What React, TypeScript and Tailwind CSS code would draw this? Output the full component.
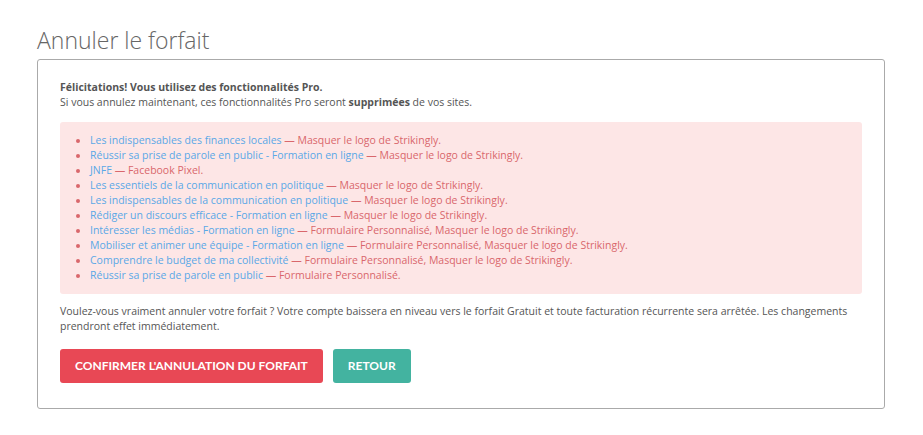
import React from "react";

const items: { a: string; b: string }[] = [
  { a: "Les indispensables des finances locales", b: "Masquer le logo de Strikingly." },
  { a: "Réussir sa prise de parole en public - Formation en ligne", b: "Masquer le logo de Strikingly." },
  { a: "JNFE", b: "Facebook Pixel." },
  { a: "Les essentiels de la communication en politique", b: "Masquer le logo de Strikingly." },
  { a: "Les indispensables de la communication en politique", b: "Masquer le logo de Strikingly." },
  { a: "Rédiger un discours efficace - Formation en ligne", b: "Masquer le logo de Strikingly." },
  { a: "Intéresser les médias - Formation en ligne", b: "Formulaire Personnalisé, Masquer le logo de Strikingly." },
  { a: "Mobiliser et animer une équipe - Formation en ligne", b: "Formulaire Personnalisé, Masquer le logo de Strikingly." },
  { a: "Comprendre le budget de ma collectivité", b: "Formulaire Personnalisé, Masquer le logo de Strikingly." },
  { a: "Réussir sa prise de parole en public", b: "Formulaire Personnalisé." },
];

export default function App() {
  return (
    <div className="w-[923px] h-[435px] bg-white font-['Open_Sans',sans-serif] text-[#555]">
      <div className="pl-[37px] pr-[38px] pt-[22px]">
        <h1 className="text-[23px] leading-[36px] font-light text-[#666]">Annuler le forfait</h1>
        <div className="mt-[1px] border border-[#aaa] rounded-[3px] px-[22px] pt-[20px] pb-[25px]">
          <p className="text-[10.5px] leading-[15px] text-[#555]">
            <span className="font-bold">Félicitations! Vous utilisez des fonctionnalités Pro.</span>
            <br />
            Si vous annulez maintenant, ces fonctionnalités Pro seront <span className="font-bold">supprimées</span> de vos sites.
          </p>
          <div className="mt-[12px] bg-[#fde6e6] rounded-[3px] pt-[11px] pb-[11px] pl-[18px]">
            <ul className="list-disc pl-[12px] text-[10.5px] leading-[15px] text-[#d9676c] marker:text-[#d9676c]">
              {items.map((it, i) => (
                <li key={i}>
                  <span className="text-[#5aa8e6]">{it.a}</span> — {it.b}
                </li>
              ))}
            </ul>
          </div>
          <p className="mt-[10px] text-[10.5px] leading-[15px] text-[#555]">
            Voulez-vous vraiment annuler votre forfait ? Votre compte baissera en niveau vers le forfait Gratuit et toute facturation récurrente sera arrêtée. Les changements prendront effet immédiatement.
          </p>
          <div className="mt-[15px] flex gap-[10px]">
            <button className="h-[34px] px-[15px] rounded-[3px] bg-[#e84855] text-white font-['Lato',sans-serif] font-bold text-[12px]">
              CONFIRMER L'ANNULATION DU FORFAIT
            </button>
            <button className="h-[34px] px-[15px] rounded-[3px] bg-[#43b3a0] text-white font-['Lato',sans-serif] font-bold text-[12px]">
              RETOUR
            </button>
          </div>
        </div>
      </div>
    </div>
  );
}
